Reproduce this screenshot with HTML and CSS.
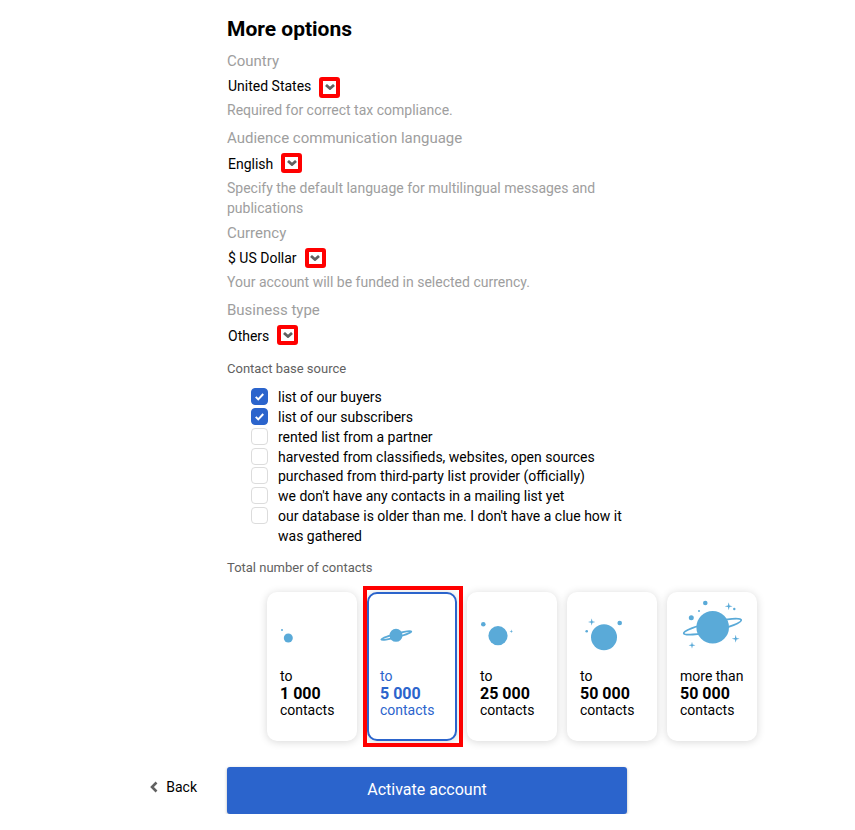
FILE: index.html
```html
<!DOCTYPE html>
<html lang="en">
<head>
    <meta charset="UTF-8">
    <title>More options</title>
    <link rel="stylesheet" href="styles.css">
</head>
<body>
    <svg class="icon-defs" width="0" height="0">
        <symbol id="sparkle" viewBox="0 0 10 10"><path d="M5 0 L6 4 L10 5 L6 6 L5 10 L4 6 L0 5 L4 4 Z"/></symbol>
    </svg>
    <div class="page">
        <h1>More options</h1>

        <div class="field">
            <div class="field-label">Country</div>
            <div class="select-row">
                <span class="select-value">United States</span>
                <span class="select-arrow"><svg viewBox="0 0 10 6"><path d="M1 1 L5 4.5 L9 1"/></svg></span>
            </div>
            <div class="field-hint">Required for correct tax compliance.</div>
        </div>

        <div class="field field-low field-long">
            <div class="field-label">Audience communication language</div>
            <div class="select-row">
                <span class="select-value">English</span>
                <span class="select-arrow"><svg viewBox="0 0 10 6"><path d="M1 1 L5 4.5 L9 1"/></svg></span>
            </div>
            <div class="field-hint">Specify the default language for multilingual messages and publications</div>
        </div>

        <div class="field">
            <div class="field-label">Currency</div>
            <div class="select-row">
                <span class="select-value">$ US Dollar</span>
                <span class="select-arrow"><svg viewBox="0 0 10 6"><path d="M1 1 L5 4.5 L9 1"/></svg></span>
            </div>
            <div class="field-hint">Your account will be funded in selected currency.</div>
        </div>

        <div class="field field-low">
            <div class="field-label">Business type</div>
            <div class="select-row">
                <span class="select-value">Others</span>
                <span class="select-arrow"><svg viewBox="0 0 10 6"><path d="M1 1 L5 4.5 L9 1"/></svg></span>
            </div>
        </div>

        <div class="section-title source-title">Contact base source</div>
        <ul class="check-list">
            <li class="check-item checked"><span class="check-box"><svg viewBox="0 0 18 18"><path d="M4.5 9.5 L7.5 12.5 L13.5 6"/></svg></span>list of our buyers</li>
            <li class="check-item checked"><span class="check-box"><svg viewBox="0 0 18 18"><path d="M4.5 9.5 L7.5 12.5 L13.5 6"/></svg></span>list of our subscribers</li>
            <li class="check-item"><span class="check-box"></span>rented list from a partner</li>
            <li class="check-item"><span class="check-box"></span>harvested from classifieds, websites, open sources</li>
            <li class="check-item"><span class="check-box"></span>purchased from third-party list provider (officially)</li>
            <li class="check-item"><span class="check-box"></span>we don't have any contacts in a mailing list yet</li>
            <li class="check-item"><span class="check-box"></span>our database is older than me. I don't have a clue how it was gathered</li>
        </ul>

        <div class="section-title total-title">Total number of contacts</div>
        <div class="cards">
            <div class="card">
                <div class="card-icon">
                    <svg viewBox="0 0 64 60"><circle cx="2" cy="32" r="1"/><circle cx="8.300" cy="40" r="4.500"/></svg>
                </div>
                <div>to</div>
                <div class="card-num">1 000</div>
                <div>contacts</div>
            </div>
            <div class="card selected">
                <div class="card-icon">
                    <svg viewBox="0 0 64 60">
                        <ellipse class="ring" cx="16.300" cy="37.500" rx="15.500" ry="1.800" transform="rotate(-15 16.300 37.500)"/>
                        <circle cx="16" cy="37.300" r="6.500"/>
                    </svg>
                </div>
                <div>to</div>
                <div class="card-num">5 000</div>
                <div>contacts</div>
            </div>
            <div class="card">
                <div class="card-icon">
                    <svg viewBox="0 0 64 60"><circle cx="3.300" cy="26.300" r="2.300"/><circle cx="18" cy="37.700" r="9.600"/><use href="#sparkle" x="29.300" y="31.300" width="4" height="4"/></svg>
                </div>
                <div>to</div>
                <div class="card-num">25 000</div>
                <div>contacts</div>
            </div>
            <div class="card">
                <div class="card-icon">
                    <svg viewBox="0 0 64 60"><use href="#sparkle" x="8" y="20.300" width="7.400" height="7.400"/><circle cx="6.700" cy="33.300" r="1.300"/><circle cx="39.700" cy="25" r="2.300"/><circle cx="24" cy="39.300" r="13"/></svg>
                </div>
                <div>to</div>
                <div class="card-num">50 000</div>
                <div>contacts</div>
            </div>
            <div class="card">
                <div class="card-icon">
                    <svg viewBox="0 0 64 60">
                        <circle cx="25.300" cy="5" r="2.300"/><circle cx="19" cy="13" r="1"/><circle cx="11.300" cy="19.700" r="2.500"/><circle cx="54.300" cy="11" r="1.200"/>
                        <use href="#sparkle" x="44.700" y="4.300" width="8" height="8"/>
                        <use href="#sparkle" x="51.700" y="36.700" width="8" height="8"/>
                        <use href="#sparkle" x="8.500" y="43.800" width="7" height="7"/>
                        <ellipse class="ring" cx="32.500" cy="28.700" rx="29.500" ry="4.500" transform="rotate(-13 32.500 28.700)"/>
                        <circle cx="32.700" cy="29.300" r="16.300"/>
                    </svg>
                </div>
                <div>more than</div>
                <div class="card-num">50 000</div>
                <div>contacts</div>
            </div>
        </div>

        <div class="actions">
            <a class="back-link" href="#">
                <svg viewBox="0 0 8 12"><path d="M6.500 1.500 L2 6 L6.500 10.500"/></svg>
                Back
            </a>
            <button class="activate-button">Activate account</button>
        </div>
    </div>
</body>
</html>
```

FILE: styles.css
```css
* {
    margin: 0;
    padding: 0;
    box-sizing: border-box;
}

body {
    font-family: Roboto, sans-serif;
    background: #fff;
    color: #000;
    font-size: 14px;
}

.icon-defs {
    display: block;
    height: 0;
}

.page {
    width: 400px;
    margin-left: 227px;
    padding-top: 17px;
}

h1 {
    font-size: 21px;
    font-weight: 700;
    line-height: 24px;
    margin-bottom: 10px;
}

.field {
    margin-bottom: 8px;
}

.field-long {
    margin-bottom: 5px;
}

.field-label {
    font-size: 15px;
    line-height: 20px;
    color: #9e9e9e;
}

.select-row {
    display: flex;
    align-items: center;
    height: 30px;
    padding-left: 1px;
    margin-bottom: -1px;
}

.field-low .select-row {
    padding-top: 1px;
    margin-bottom: 0;
}

.select-value {
    font-size: 14px;
}

.select-arrow {
    display: flex;
    align-items: center;
    justify-content: center;
    width: 21px;
    height: 20px;
    margin-left: 8px;
    border: 4px solid #f00;
    border-radius: 3px;
}

h1 + .field .select-arrow {
    height: 21px;
    margin-top: 2px;
}

.field-low .select-arrow {
    margin-bottom: 2px;
}

.select-arrow svg {
    width: 10px;
    height: 6px;
    fill: none;
    stroke: #616161;
    stroke-width: 2.800;
}

.field-hint {
    font-size: 14px;
    line-height: 20px;
    color: #9e9e9e;
}

.section-title {
    font-size: 13px;
    line-height: 16px;
    color: #616161;
}

.source-title {
    margin-top: 11px;
}

.check-list {
    list-style: none;
    margin-top: 11.300px;
    padding-left: 24px;
    width: 400px;
}

.check-item {
    position: relative;
    padding-left: 27px;
    line-height: 19.800px;
    font-size: 14px;
}

.check-box {
    position: absolute;
    left: 0;
    top: 0;
    width: 17px;
    height: 17px;
    border: 1px solid #dcdcdc;
    border-radius: 4px;
    background: #fff;
}

.check-item.checked .check-box {
    background: #2b64cc;
    border-color: #2b64cc;
}

.check-box svg {
    display: block;
    width: 15px;
    height: 15px;
    fill: none;
    stroke: #fff;
    stroke-width: 2.400;
}

.total-title {
    margin-top: 13.300px;
}

.cards {
    display: flex;
    gap: 10px;
    margin-top: 16px;
    margin-left: 40px;
    width: 490px;
}

.card {
    position: relative;
    flex: 0 0 90px;
    height: 149px;
    padding: 0 13px;
    border-radius: 10px;
    background: #fff;
    box-shadow: 0 1px 8px rgba(0, 0, 0, 0.16);
    font-size: 14px;
    line-height: 17px;
}

.card-icon {
    height: 76px;
    padding-top: 6px;
}

.card-icon svg {
    display: block;
    width: 64px;
    height: 60px;
    overflow: visible;
    fill: #5aaad8;
}

.card-icon .ring {
    fill: none;
    stroke: #5aaad8;
    stroke-width: 1.800;
}

.card-num {
    font-size: 16px;
    font-weight: 700;
}

.card.selected {
    color: #2b64cc;
    border: 2px solid #2b64cc;
    padding: 0 11px;
}

.card.selected .card-icon {
    height: 74px;
    padding-top: 4px;
}

/* red annotation box */
.card.selected::after {
    content: "";
    position: absolute;
    top: -8px;
    left: -6px;
    right: -8px;
    bottom: -8px;
    border: 4px solid #f00;
}

.actions {
    position: relative;
    margin-top: 26px;
}

.back-link {
    position: absolute;
    right: 430px;
    top: 12px;
    display: flex;
    align-items: center;
    gap: 8px;
    color: #000;
    text-decoration: none;
    font-size: 14px;
    line-height: 16px;
    white-space: nowrap;
}

.back-link svg {
    width: 8px;
    height: 12px;
    fill: none;
    stroke: #616161;
    stroke-width: 2.600;
}

.activate-button {
    display: block;
    width: 400px;
    height: 47px;
    padding-bottom: 2px;
    border: none;
    border-radius: 3px;
    background: #2b64cc;
    color: #fff;
    font-family: Roboto, sans-serif;
    font-size: 16px;
    box-shadow: 0 1px 3px rgba(0, 0, 0, 0.3);
}
```
